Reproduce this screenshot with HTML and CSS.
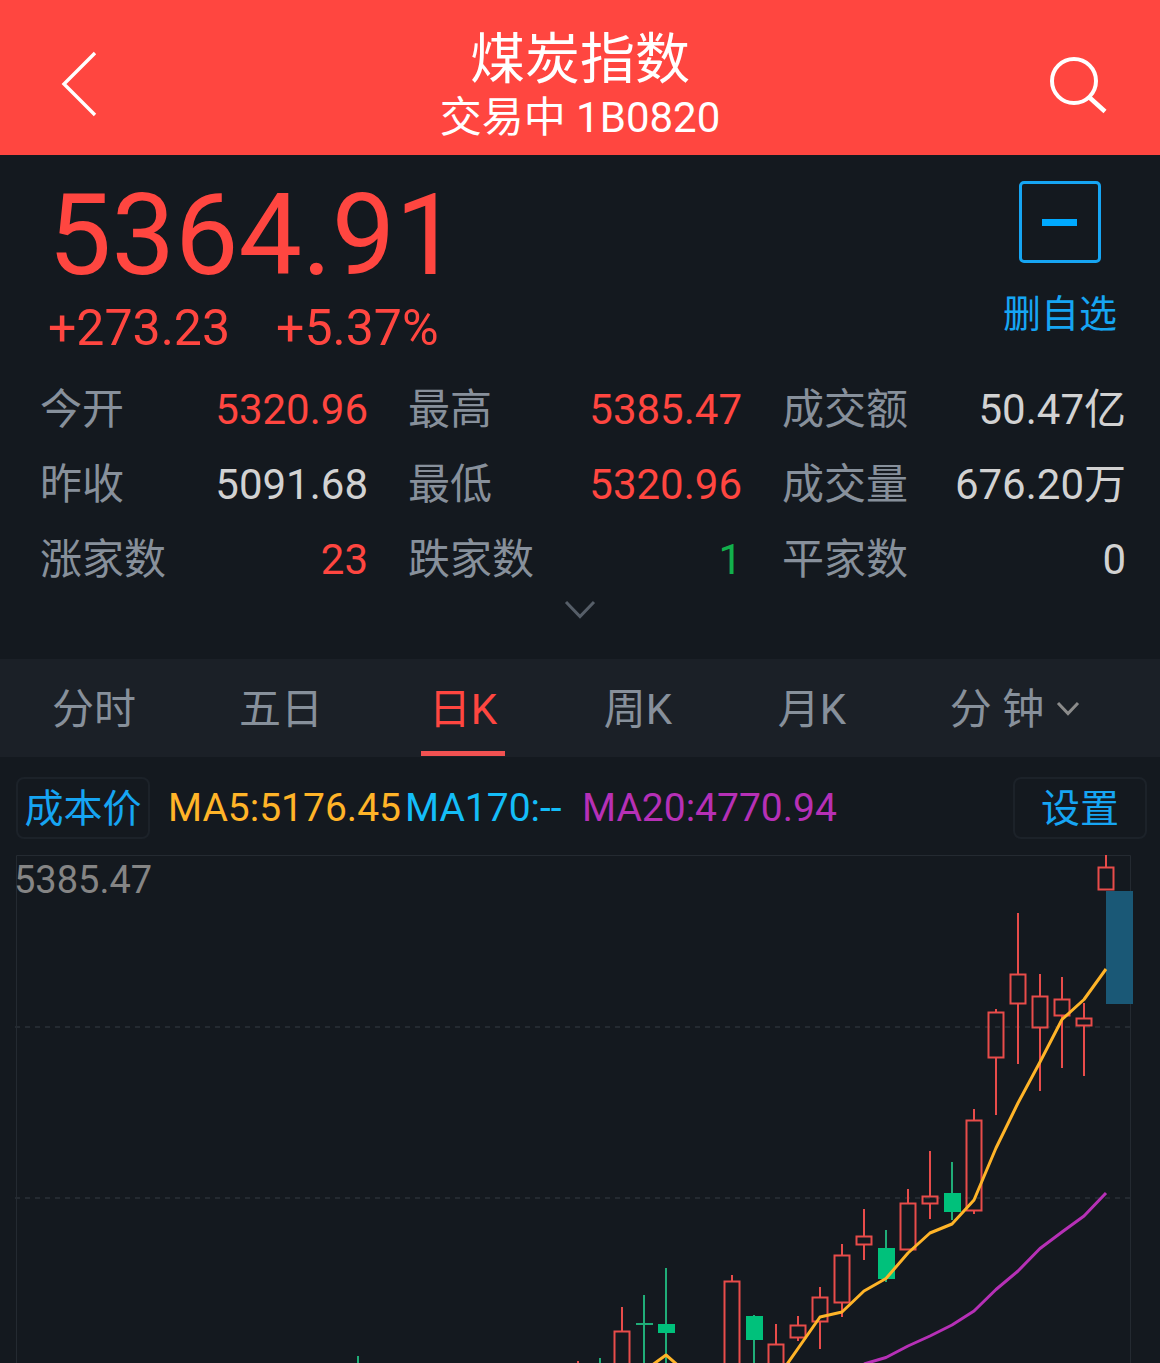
FILE: index.html
```html
<!DOCTYPE html>
<html lang="zh-CN">
<head>
<meta charset="utf-8">
<meta name="viewport" content="width=device-width, initial-scale=1">
<title>煤炭指数 1B0820</title>
<link rel="stylesheet" href="styles.css">
</head>
<body>
<header class="topbar">
  <button class="icon-button back" type="button" aria-label="返回">
    <svg width="38" height="68" viewBox="0 0 38 68" fill="none" stroke="currentColor" stroke-width="3.4"><path d="M35 3 4 34 35 65"/></svg>
  </button>
  <div class="heading">
    <h1 class="title">煤炭指数</h1>
    <p class="subtitle">交易中 1B0820</p>
  </div>
  <button class="icon-button search" type="button" aria-label="搜索">
    <svg width="60" height="60" viewBox="0 0 60 60" fill="none" stroke="currentColor" stroke-width="4"><circle cx="26" cy="26" r="22"/><path d="M41.500 42.500 57 56.500" stroke-width="4.500"/></svg>
  </button>
</header>

<main>
  <section class="quote">
    <div class="price-block">
      <p class="price">5364.91</p>
      <p class="change"><span>+273.23</span><span>+5.37%</span></p>
    </div>
    <button class="watch" type="button">
      <span class="watch-box"><span class="watch-minus"></span></span>
      <span>删自选</span>
    </button>
  </section>

  <dl class="stats">
    <div class="stat"><dt>今开</dt><dd class="up">5320.96</dd></div>
    <div class="stat"><dt>最高</dt><dd class="up">5385.47</dd></div>
    <div class="stat"><dt>成交额</dt><dd>50.47亿</dd></div>
    <div class="stat"><dt>昨收</dt><dd>5091.68</dd></div>
    <div class="stat"><dt>最低</dt><dd class="up">5320.96</dd></div>
    <div class="stat"><dt>成交量</dt><dd>676.20万</dd></div>
    <div class="stat"><dt>涨家数</dt><dd class="up">23</dd></div>
    <div class="stat"><dt>跌家数</dt><dd class="down">1</dd></div>
    <div class="stat"><dt>平家数</dt><dd>0</dd></div>
  </dl>
  <button class="expand" type="button" aria-label="展开">
    <svg width="32" height="20" viewBox="0 0 32 20" fill="none" stroke="currentColor" stroke-width="3"><path d="M2 2 16 16.500 30 2"/></svg>
  </button>

  <nav class="tabs">
    <button class="tab" type="button">分时</button>
    <button class="tab" type="button">五日</button>
    <button class="tab active" type="button" aria-current="true">日K</button>
    <button class="tab" type="button">周K</button>
    <button class="tab" type="button">月K</button>
    <button class="tab" type="button">分 钟
      <svg class="caret" width="24" height="16" viewBox="0 0 24 16" fill="none" stroke="#8b8b8b" stroke-width="3"><path d="M2 2 12 12.500 22 2"/></svg>
    </button>
  </nav>

  <div class="indicators">
    <button class="chip" type="button">成本价</button>
    <p class="averages"><span class="ma5">MA5:5176.45</span><span class="ma170">MA170:--</span><span class="ma20">MA20:4770.94</span></p>
    <button class="chip" type="button">设置</button>
  </div>

  <svg class="chart" viewBox="0 855 1160 508" role="img" aria-label="日K线图">
    <g class="frame">
      <path d="M16.500 1363V855.500H1130.500V1363"/>
      <path class="dashed" d="M15 1027H1130M15 1198H1130"/>
    </g>
    <text class="scale" x="14" y="893">5385.47</text>
    <rect class="gap-area" x="1106" y="891" width="27" height="113"/>
    <g class="rise">
      <path d="M1106 855V868M1084 1003V1018M1084 1026V1076M1062 977V999M1062 1015V1068M1040 974V996M1040 1027V1091M1018 913V974M1018 1003V1064M996 1009V1012M996 1058V1115M974 1109V1120M974 1210V1214M930 1151V1196M930 1203V1219M908 1189V1203M864 1209V1236M864 1244V1260M842 1244V1255M842 1302V1317M820 1287V1298M820 1321V1349M798 1316V1325M798 1338V1341M776 1324V1345M732 1275V1281M622 1307V1332M578 1361V1363"/>
      <rect x="1098.500" y="867.500" width="15" height="22"/>
      <rect x="1076.500" y="1018.500" width="15" height="7"/>
      <rect x="1054.500" y="999.500" width="15" height="16"/>
      <rect x="1032.500" y="996.500" width="15" height="31"/>
      <rect x="1010.500" y="974.500" width="15" height="29"/>
      <rect x="988.500" y="1012.500" width="15" height="45"/>
      <rect x="966.500" y="1120.500" width="15" height="90"/>
      <rect x="922.500" y="1196.500" width="15" height="7"/>
      <rect x="900.500" y="1203.500" width="15" height="46"/>
      <rect x="856.500" y="1236.500" width="15" height="8"/>
      <rect x="834.500" y="1255.500" width="15" height="47"/>
      <rect x="812.500" y="1297.500" width="15" height="24"/>
      <rect x="790.500" y="1325.500" width="15" height="12"/>
      <rect x="768.500" y="1344.500" width="15" height="30"/>
      <rect x="724.500" y="1281.500" width="15" height="90"/>
      <rect x="614.500" y="1331.500" width="15" height="40"/>
    </g>
    <g class="fall">
      <path d="M952 1162V1220M886 1230V1282M754 1315V1363M666 1268V1363M644 1295V1363M636 1324H653M600 1358V1363M358 1356V1363"/>
      <rect x="944" y="1193" width="17" height="19"/>
      <rect x="878" y="1248" width="17" height="31"/>
      <rect x="746" y="1316" width="17" height="24"/>
      <rect x="658" y="1324" width="17" height="9"/>
    </g>
    <polyline class="line5" points="644,1371 666,1355 688,1374"/>
    <polyline class="line5" points="776,1380 820,1317 842,1312 864,1291 886,1278.500 908,1253 930,1233 952,1224 974,1200 996,1148 1018,1103 1040,1062 1062,1019.500 1084,999.500 1106,969"/>
    <polyline class="line20" points="864,1364 886,1357.500 908,1346 930,1336 952,1325 974,1311 996,1289.500 1018,1271 1040,1248.500 1062,1232 1084,1216 1106,1193"/>
  </svg>
</main>
</body>
</html>
```
FILE: styles.css
```css
:root {
  --bg: #14191f;
  --red: #ff4640;
  --grey: #87909b;
  --blue: #16a5f3;
}

* {
  box-sizing: border-box;
}

body {
  margin: 0;
  background: var(--bg);
  color: #d2d2d2;
  font-family: Roboto, "Noto Sans CJK SC", sans-serif;
  font-size: 42px;
}

h1, p, dl, dd {
  margin: 0;
  font-weight: 400;
}

button {
  margin: 0;
  padding: 0;
  border: 0;
  background: none;
  color: inherit;
  font: inherit;
  cursor: pointer;
}

svg {
  display: block;
}

.topbar {
  display: grid;
  grid-template-columns: 1fr auto 1fr;
  height: 155px;
  padding: 25px 52px 0;
  background: var(--red);
  color: #fff;
}

.heading {
  text-align: center;
}

.title {
  font-size: 55px;
  line-height: 68px;
}

.subtitle {
  font-size: 42px;
  line-height: 50px;
}

.icon-button {
  align-self: start;
}

.back {
  justify-self: start;
  margin: 25px 0 0 8px;
}

.search {
  justify-self: end;
  margin-top: 30px;
}

.quote {
  display: flex;
  justify-content: space-between;
  height: 217px;
  padding: 26px 43px 0 48px;
}

.price-block {
  padding-top: 12px;
  color: var(--red);
}

.price {
  font-size: 113px;
  line-height: 86px;
}

.change {
  display: flex;
  gap: 46px;
  padding-top: 23px;
  font-size: 50px;
  line-height: 52px;
}

.watch {
  display: flex;
  flex-direction: column;
  align-items: center;
  gap: 27px;
  align-self: start;
  color: var(--blue);
  font-size: 38px;
  line-height: 48px;
}

.watch-box {
  display: flex;
  justify-content: center;
  width: 82px;
  height: 82px;
  padding-top: 35px;
  border: 3px solid var(--blue);
  border-radius: 5px;
}

.watch-minus {
  width: 35px;
  height: 7px;
  background: #00a9ff;
}

.stats {
  display: grid;
  grid-template-columns: 328fr 334fr 344fr;
  grid-auto-rows: 75px;
  column-gap: 40px;
  padding: 0 34px 0 40px;
  line-height: 75px;
}

.stat {
  display: flex;
  justify-content: space-between;
}

.stat dt,
.tab {
  color: var(--grey);
}

.stat .up {
  color: var(--red);
}

.stat .down {
  color: #12b04c;
}

.expand {
  display: flex;
  justify-content: center;
  width: 100%;
  height: 62px;
  padding-top: 3px;
  color: #565e68;
}

.tabs {
  display: grid;
  grid-template-columns: 188fr 186fr 178fr 172fr 176fr 230fr;
  height: 98px;
  padding-right: 30px;
  background: #1b2027;
}

.tab {
  display: flex;
  align-items: center;
  justify-content: center;
  gap: 12px;
  padding-bottom: 5px;
}

.tab.active {
  justify-self: center;
  width: 84px;
  margin-bottom: 1px;
  padding: 1px 0 0;
  border-bottom: 5px solid #f15151;
  color: var(--red);
}

.caret {
  margin-top: 6px;
}

.indicators {
  display: flex;
  align-items: center;
  height: 98px;
  padding: 4px 13px 0 16px;
  font-size: 39px;
}

.chip {
  width: 134px;
  height: 62px;
  padding-top: 2px;
  border: 2px solid #1c2229;
  border-radius: 8px;
  color: var(--blue);
  line-height: 54px;
}

.averages {
  display: flex;
  flex: 1;
  gap: 4px;
  padding-left: 18px;
  line-height: 56px;
}

.ma5 {
  color: #ffb428;
}

.ma170 {
  min-width: 173px;
  color: #14bdf8;
}

.ma20 {
  color: #b630b6;
}

.chart {
  width: 100%;
  height: auto;
}

.frame {
  fill: none;
  stroke: #242a31;
}

.dashed {
  stroke-width: 2;
  stroke-dasharray: 5 5;
}

.scale {
  fill: #858585;
  font-size: 38px;
}

.gap-area {
  fill: #1a5876;
}

.rise {
  fill: none;
  stroke: #e84c4a;
  stroke-width: 2;
}

.fall path {
  stroke: #20ad78;
  stroke-width: 2;
}

.fall rect {
  fill: #00c17b;
}

.line5,
.line20 {
  fill: none;
  stroke-width: 3;
  stroke-linejoin: round;
}

.line5 {
  stroke: #ffb428;
}

.line20 {
  stroke: #b630b6;
}
```
